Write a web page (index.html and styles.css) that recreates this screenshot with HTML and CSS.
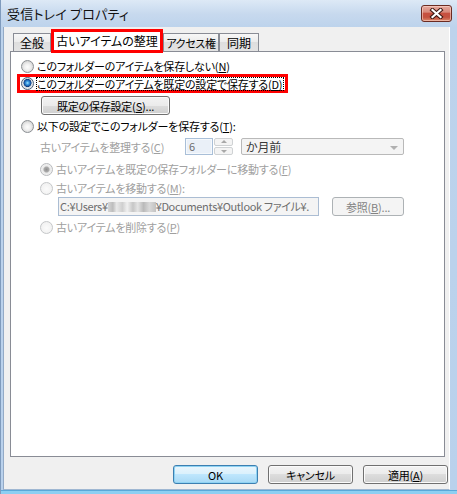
FILE: index.html
```html
<!DOCTYPE html>
<html lang="ja">
<head>
<meta charset="utf-8">
<title>受信トレイ プロパティ</title>
<link rel="stylesheet" href="styles.css">
</head>
<body>
<div class="window">
  <div class="titlebar">
    <span class="title">受信トレイ プロパティ</span>
    <span class="close">
      <svg width="15" height="11" viewBox="0 0 15 11">
        <path d="M3.5 2 L11.5 9 M11.5 2 L3.5 9" stroke="#3c1712" stroke-width="4.2" stroke-linecap="square" fill="none"/>
        <path d="M3.5 2 L11.5 9 M11.5 2 L3.5 9" stroke="#ffffff" stroke-width="2.2" stroke-linecap="square" fill="none"/>
      </svg>
    </span>
  </div>
  <div class="client">
    <div class="tabs">
      <div class="tab tab-general">全般</div>
      <div class="tab tab-active">古いアイテムの整理</div>
      <div class="tab tab-access">アクセス権</div>
      <div class="tab tab-sync">同期</div>
    </div>
    <div class="panel">
      <div class="opt row1"><span class="radio"></span><span>このフォルダーのアイテムを保存しない(<u>N</u>)</span></div>
      <div class="opt hl"><span class="radio checked"></span><span class="focus">このフォルダーのアイテムを既定の設定で保存する(<u>D</u>)</span></div>
      <div class="btn btn-defaults">既定の保存設定(<u>S</u>)...</div>
      <div class="opt row3"><span class="radio"></span><span>以下の設定でこのフォルダーを保存する(<u>T</u>):</span></div>
      <div class="agerow">
        <span class="agelabel dis">古いアイテムを整理する(<u>C</u>)</span>
        <span class="spinfield">6</span>
        <span class="spinbtns"><span class="spin up"></span><span class="spin down"></span></span>
        <span class="combo"><span>か月前</span><span class="arrow"></span></span>
      </div>
      <div class="opt sub row5"><span class="radio dchecked"></span><span class="dis">古いアイテムを既定の保存フォルダーに移動する(<u>F</u>)</span></div>
      <div class="opt sub row6"><span class="radio disabled"></span><span class="dis">古いアイテムを移動する(<u>M</u>):</span></div>
      <div class="pathrow">
        <span class="pathbox">C:¥Users¥<span class="redact"></span>¥Documents¥Outlook ファイル¥.</span>
        <span class="btn btn-dis btn-browse">参照(<u>B</u>)...</span>
      </div>
      <div class="opt sub row7"><span class="radio disabled"></span><span class="dis">古いアイテムを削除する(<u>P</u>)</span></div>
    </div>
    <div class="buttons">
      <div class="btn btn-main btn-ok">OK</div>
      <div class="btn btn-main">キャンセル</div>
      <div class="btn btn-main">適用(<u>A</u>)</div>
    </div>
  </div>
</div>
</body>
</html>
```
FILE: styles.css
```css
html, body {
  margin: 0;
  padding: 0;
  background: #b9d1ec;
}
body {
  font-family: "Noto Sans CJK JP", "Noto Sans", sans-serif;
  font-size: 11px;
  font-feature-settings: "palt";
  letter-spacing: -0.2px;
  color: #000;
}
u { text-underline-offset: 1px; }

.window {
  width: 457px;
  height: 494px;
  box-sizing: border-box;
  padding-bottom: 4px;
  display: flex;
  flex-direction: column;
  background:
    linear-gradient(to top, #8ccff2 0, #8ccff2 3px, #5aa8d8 3px, #5aa8d8 4px, transparent 4px),
    linear-gradient(#dde9f6 0, #c7d9ee 14px, #bdd3ec 27px, #b9d1ec 100%);
  border-left: 1px solid #7f9bbd;
}

.titlebar {
  height: 27px;
  flex: none;
  display: flex;
  align-items: flex-start;
}
.title {
  font-size: 13px;
  line-height: 13px;
  padding-left: 6px;
  padding-top: 7px;
  color: #111;
  letter-spacing: 0.2px;
  white-space: nowrap;
}
.close {
  margin-left: auto;
  margin-right: 5px;
  margin-top: 5px;
  width: 31px;
  height: 17px;
  box-sizing: border-box;
  border: 1px solid #6b2b22;
  border-radius: 3px;
  background: linear-gradient(#e7a99f 0, #d88a7b 40%, #c75040 50%, #c4513f 75%, #dc8a6c 100%);
  box-shadow: inset 0 0 0 1px rgba(255, 220, 210, 0.55);
  display: flex;
  align-items: center;
  justify-content: center;
}
.close svg { display: block; }

.client {
  flex: 1;
  margin-left: 2px;
  margin-right: 7px;
  background: #f0f0f0;
  border-left: 1px solid #93aac6;
  border-right: 1px solid #ffffff;
  border-bottom: 1px solid #9fb7d2;
  display: flex;
  flex-direction: column;
}

/* tabs */
.tabs {
  display: flex;
  align-items: flex-end;
  height: 22px;
  margin-top: 2px;
  padding-left: 9px;
  position: relative;
  z-index: 2;
}
.tab {
  height: 18px;
  box-sizing: border-box;
  border: 1px solid #898c95;
  border-bottom: none;
  background: linear-gradient(#f7f7f7 0, #ebebeb 50%, #dedede 50%, #e3e3e3 100%);
  display: flex;
  align-items: center;
  justify-content: center;
  line-height: 14px;
  padding-top: 1px;
  white-space: nowrap;
  font-size: 12px;
  letter-spacing: 0;
}
.tab-general { width: 38px; }
.tab-active {
  width: 112px;
  height: 24px;
  margin-bottom: -2px;
  border: 3px solid #ff0000;
  background: #ffffff;
  font-size: 12px;
  padding-top: 0;
}
.tab-access { width: 56px; font-size: 11px; letter-spacing: -0.3px; }
.tab-sync { width: 40px; }

/* panel */
.panel {
  margin-left: 6px;
  width: 435px;
  height: 406px;
  box-sizing: border-box;
  border: 1px solid #898c95;
  background: #ffffff;
  display: flex;
  flex-direction: column;
  align-items: flex-start;
  flex: none;
}
.opt {
  display: flex;
  align-items: center;
  height: 18px;
  line-height: 14px;
  padding-left: 10px;
  white-space: nowrap;
}
.row1 { margin-top: 5px; }
.opt.hl {
  margin-left: 6px;
  padding-left: 1px;
  padding-right: 2px;
  border: 3px solid #ff0000;
  box-sizing: border-box;
  height: 19px;
  margin-top: -1px;
  width: 271px;
}
.focus {
  outline: 1px dotted #000;
  outline-offset: 0;
  line-height: 12px;
  padding-right: 1px;
}
.radio {
  width: 13px;
  height: 13px;
  flex: none;
  box-sizing: border-box;
  border-radius: 50%;
  border: 1px solid #8b8f93;
  background: radial-gradient(circle at 50% 55%, #fdfdfd 0, #f0f0f0 3px, #d6d6d6 6px);
  margin-right: 3px;
}
.radio.checked {
  border-color: #4a6078;
  background: radial-gradient(circle at 50% 45%, #9fe3ff 0, #3c9be0 1.6px, #1a5fb0 3px, #0d3c78 3.7px, #d2d7de 4.3px, #eef0f2 6px);
}
.radio.disabled {
  border-color: #c5c7c9;
  background: radial-gradient(circle at 50% 55%, #fbfbfb 0, #f1f1f1 6px);
}
.radio.dchecked {
  border-color: #b8babd;
  background: radial-gradient(circle, #8f8f8f 0, #a9a9a9 2.4px, #e9e9e9 3.6px, #f4f4f4 6px);
}
.dis { color: #a0a0a0; }

.btn {
  box-sizing: border-box;
  border: 1px solid #707070;
  border-radius: 3px;
  background: linear-gradient(#f3f3f3 0, #ebebeb 50%, #dddddd 50%, #cfcfcf 100%);
  box-shadow: inset 0 0 0 1px #fbfbfb;
  display: flex;
  align-items: center;
  justify-content: center;
  line-height: 14px;
  white-space: nowrap;
  flex: none;
}
.btn-defaults {
  margin-left: 30px;
  margin-top: 3px;
  width: 129px;
  height: 19px;
}
.row3 { margin-top: 2px; }

.agerow {
  display: flex;
  align-items: center;
  height: 17px;
  margin-top: 3px;
  padding-left: 29px;
}
.agelabel {
  width: 145px;
  white-space: nowrap;
}
.spinfield {
  width: 28px;
  height: 17px;
  box-sizing: border-box;
  border: 1px solid #a9bfd8;
  background: #eaf0f8;
  color: #6d6d6d;
  padding-left: 3px;
  line-height: 15px;
  box-shadow: inset 0 0 0 1px #f6f9fc;
}
.spinbtns {
  display: flex;
  flex-direction: column;
  width: 19px;
  height: 17px;
  margin-left: 1px;
}
.spin {
  height: 8px;
  box-sizing: border-box;
  border: 1px solid #cfd2d4;
  border-radius: 2px;
  background: #f4f4f4;
  position: relative;
}
.spin.down { margin-top: 1px; }
.spin::after {
  content: "";
  position: absolute;
  left: 6px;
  top: 1px;
  border-left: 3px solid transparent;
  border-right: 3px solid transparent;
}
.spin.up::after { border-bottom: 3px solid #a8a8a8; }
.spin.down::after { border-top: 3px solid #a8a8a8; top: 2px; }
.combo {
  margin-left: 8px;
  width: 163px;
  height: 17px;
  box-sizing: border-box;
  border: 1px solid #b9b9b9;
  border-radius: 2px;
  background: #f4f4f4;
  display: flex;
  align-items: center;
  padding-left: 4px;
  color: #3a3a3a;
  line-height: 14px;
  font-size: 12px;
}
.combo .arrow {
  margin-left: auto;
  margin-right: 5px;
  border-left: 4px solid transparent;
  border-right: 4px solid transparent;
  border-top: 4px solid #b0b0b0;
  margin-top: 2px;
}

.opt.sub { padding-left: 29px; }
.row5 { margin-top: 5px; }
.row6 { margin-top: 1px; }

.pathrow {
  display: flex;
  align-items: center;
  padding-left: 47px;
  height: 19px;
}
.pathbox {
  width: 261px;
  height: 19px;
  box-sizing: border-box;
  border: 1px solid #abbdd3;
  background: #f4f4f4;
  color: #6d6d6d;
  padding-left: 1px;
  line-height: 17px;
  overflow: hidden;
  white-space: nowrap;
  font-size: 11px;
  letter-spacing: -0.35px;
}
.redact {
  display: inline-block;
  width: 48px;
  height: 10px;
  vertical-align: -1px;
  background:
    linear-gradient(90deg, #d6d6d6 0, #bdbdbd 10%, #e9e9e9 18%, #cfcfcf 30%, #f0f0f0 40%, #c6c6c6 52%, #e4e4e4 62%, #bababa 74%, #d9d9d9 86%, #c2c2c2 100%);
}
.btn-dis {
  border-color: #adb2b5;
  background: #f4f4f4;
  box-shadow: none;
  color: #838383;
}
.btn-browse {
  margin-left: 13px;
  width: 72px;
  height: 19px;
}
.row7 { margin-top: 2px; }

.buttons {
  display: flex;
  justify-content: flex-end;
  gap: 10px;
  padding-right: 1px;
  margin-top: 8px;
}
.btn-main {
  width: 85px;
  height: 19px;
}
.btn-ok {
  border-color: #3c7fb1;
  background: linear-gradient(#eaf6fd 0, #d9f0fc 50%, #bee6fd 50%, #a7d9f5 100%);
  box-shadow: inset 0 0 0 1px #8fd3f3;
}
```
